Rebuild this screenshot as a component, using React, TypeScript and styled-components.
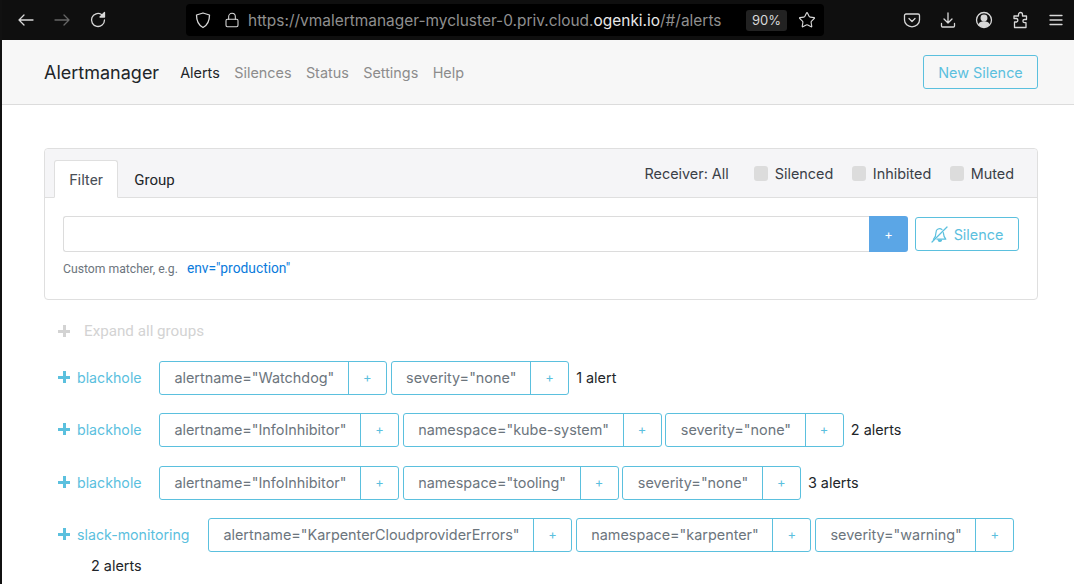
import React from 'react';
import styled, { createGlobalStyle } from 'styled-components';
import { Lock, Star } from 'lucide-react';

const GlobalStyle = createGlobalStyle`
    html, body { margin: 0; padding: 0; background: #fff; }
    body { font-family: Inter, "Liberation Sans", sans-serif; font-size: 14.4px; color: #212529; }
    * { box-sizing: border-box; }
`;

const Shell = styled.div`
    width: 1074px;
    height: 584px;
    overflow: hidden;
    border-left: 2px solid #111;
    display: flex;
    flex-direction: column;
`;

const BrowserBar = styled.div`
    height: 40px;
    margin-left: -2px;
    flex: none;
    background: #0f0f0f;
    display: flex;
    align-items: center;
    color: #d8d8d8;
`;

const NavIcons = styled.div`
    width: 186px;
    padding-left: 17px;
    display: flex;
    gap: 18px;
    flex: none;
`;

const UrlBar = styled.div`
    width: 638px;
    height: 32px;
    background: #000;
    border-radius: 4px;
    display: flex;
    align-items: center;
    padding-left: 8px;
    flex: none;
`;

const LockSlot = styled.span`
    display: flex;
    margin: 0 8px 0 12px;
`;

const UrlText = styled.span`
    width: 498px;
    font-size: 15.45px;
    color: #8f8f8f;
    white-space: nowrap;
    b { font-weight: 400; color: #e8e8e8; }
`;

const Zoom = styled.span`
    width: 41px;
    height: 21px;
    background: #222;
    border-radius: 3px;
    font-size: 13px;
    line-height: 21px;
    text-align: center;
    margin-right: 11px;
`;

const ToolIcons = styled.div`
    margin-left: 79px;
    display: flex;
    gap: 18px;
    align-items: center;
`;

const Navbar = styled.nav`
    height: 65px;
    flex: none;
    background: #f7f7f7;
    border-bottom: 1px solid #dcdcdc;
    display: flex;
    align-items: center;
    padding: 0 36px 0 42px;
`;

const Brand = styled.span`
    font-size: 18px;
    color: #212529;
    margin-right: 21px;
`;

const NavLink = styled.span<{ $active?: boolean }>`
    color: ${p => (p.$active ? '#212529' : '#8c8c8c')};
    margin-right: 14.4px;
`;

const NewSilence = styled.button`
    margin-left: auto;
    width: 115px;
    height: 34px;
    background: transparent;
    border: 1px solid #5bc0de;
    border-radius: 3px;
    color: #5bc0de;
    font: inherit;
`;

const Content = styled.main`
    padding: 43px 36px 0 42px;
`;

const Card = styled.section`
    height: 152px;
    border: 1px solid #dfdfdf;
    border-radius: 4px;
`;

const CardHeader = styled.div`
    height: 49px;
    background: #f5f5f7;
    border-bottom: 1px solid #dfdfdf;
    border-radius: 4px 4px 0 0;
    display: flex;
    align-items: flex-end;
    padding: 0 23px 0 9px;
`;

const Tab = styled.span<{ $active?: boolean }>`
    height: 38px;
    width: ${p => (p.$active ? '64px' : '73px')};
    margin-bottom: -1px;
    padding-top: 1px;
    display: flex;
    align-items: center;
    justify-content: center;
    font-family: Roboto, sans-serif;
    font-size: 15px;
    border-radius: 3px 3px 0 0;
    color: ${p => (p.$active ? '#495057' : '#212529')};
    background: ${p => (p.$active ? '#fff' : 'transparent')};
    border: 1px solid ${p => (p.$active ? '#dfdfdf' : 'transparent')};
    border-bottom: 1px solid ${p => (p.$active ? '#fff' : 'transparent')};
`;

const HeaderRight = styled.div`
    margin-left: auto;
    height: 100%;
    display: flex;
    align-items: center;
    color: #3a4047;
`;

const Receiver = styled.span`
    margin-right: 25px;
`;

const CheckLabel = styled.label`
    display: flex;
    align-items: center;
    gap: 7px;
    margin-left: 18.5px;
    &:first-of-type { margin-left: 0; }
`;

const CheckBox = styled.span`
    width: 14px;
    height: 15px;
    border-radius: 3px;
    background: #dcdcdc;
`;

const CardBody = styled.div`
    padding: 18px 18px 0;
`;

const FilterRow = styled.div`
    display: flex;
    align-items: center;
`;

const FilterInput = styled.div`
    width: 806px;
    height: 36px;
    border: 1px solid #dcdcdc;
    border-right: 0;
    border-radius: 3px 0 0 3px;
`;

const FilterAdd = styled.button`
    width: 39px;
    height: 36px;
    border: 0;
    border-radius: 0 3px 3px 0;
    background: #5ba6e6;
    color: #fff;
    font: inherit;
    font-size: 13px;
`;

const SilenceButton = styled.button`
    margin-left: 7px;
    width: 104px;
    height: 34px;
    border: 1px solid #5bc0de;
    border-radius: 3px;
    background: #fff;
    color: #5bc0de;
    font: inherit;
    display: flex;
    align-items: center;
    justify-content: center;
    gap: 6px;
`;

const Hint = styled.div`
    margin-top: 8px;
    font-family: Roboto, sans-serif;
    font-size: 12.2px;
    color: #6c757d;
    display: flex;
    align-items: baseline;
    gap: 9px;
`;

const HintLink = styled.span`
    font-size: 13.8px;
    color: #0a7bdc;
`;

const ExpandAll = styled.div`
    margin: 21px 0 0 14px;
    height: 20px;
    display: flex;
    align-items: center;
    gap: 14px;
    font-family: Roboto, sans-serif;
    font-size: 15.2px;
    color: #d3d3d3;
`;

const Plus = styled.span<{ $color: string }>`
    position: relative;
    width: 12px;
    height: 12px;
    flex: none;
    &::before, &::after {
        content: '';
        position: absolute;
        background: ${p => p.$color};
    }
    &::before { left: 0; right: 0; top: 4.5px; height: 3px; }
    &::after { top: 0; bottom: 0; left: 4.5px; width: 3px; }
`;

const GroupRow = styled.div<{ $top: number }>`
    margin-top: ${p => p.$top}px;
    display: flex;
    flex-wrap: wrap;
    align-items: center;
    padding-left: 14px;
`;

const GroupName = styled.span<{ $width: number }>`
    width: ${p => p.$width}px;
    padding-bottom: 2px;
    display: flex;
    align-items: center;
    gap: 7px;
    font-size: 14.2px;
    color: #5bc0de;
    flex: none;
`;

const Tag = styled.div`
    display: flex;
    height: 34px;
    margin-right: 3.8px;
    border: 1px solid #5bc0de;
    border-radius: 3px;
`;

const TagLabel = styled.span`
    padding: 0 13.6px 0 14.4px;
    line-height: 32px;
    color: #6c757d;
    white-space: nowrap;
`;

const TagAdd = styled.span`
    width: 38px;
    border-left: 1px solid #5bc0de;
    line-height: 30px;
    text-align: center;
    color: #5bc0de;
    font-size: 13px;
`;

const Count = styled.span<{ $wrapped?: boolean }>`
    margin-left: 3.4px;
    padding-bottom: 1px;
    ${p => p.$wrapped && `
        flex-basis: 100%;
        margin: 5px 0 0;
        padding: 0 0 0 33px;
    `}
`;

const groups = [
    { name: 'blackhole', width: 101, top: 20, tags: ['alertname="Watchdog"', 'severity="none"'], count: '1 alert' },
    { name: 'blackhole', width: 101, top: 18, tags: ['alertname="InfoInhibitor"', 'namespace="kube-system"', 'severity="none"'], count: '2 alerts' },
    { name: 'blackhole', width: 101, top: 19, tags: ['alertname="InfoInhibitor"', 'namespace="tooling"', 'severity="none"'], count: '3 alerts' },
    { name: 'slack-monitoring', width: 150, top: 18, tags: ['alertname="KarpenterCloudproviderErrors"', 'namespace="karpenter"', 'severity="warning"'], count: '2 alerts', wrap: true },
];

const Icon = ({ children, color = 'currentColor' }: { children: React.ReactNode; color?: string }) => (
    <svg width="18" height="18" viewBox="0 0 18 18" fill="none" stroke={color} strokeWidth="1.3" strokeLinecap="round" strokeLinejoin="round">
        {children}
    </svg>
);

const BellSlash = () => (
    <svg width="17" height="17" viewBox="0 0 17 17" fill="none" stroke="currentColor" strokeWidth="1.2" strokeLinecap="round" strokeLinejoin="round">
        <path d="M16 1 1 16" />
        <path d="M11 3.6A3.6 3.6 0 0 0 5 6.4c0 2.6-.9 5.2-2.6 7" />
        <path d="M12.3 6.6c.2 2.4.9 4.7 2.5 6.6 H6" />
        <path d="M7.3 14.2a1.7 1.7 0 0 0 3.2 0z" fill="currentColor" />
    </svg>
);

export default function App() {
    return (
        <Shell>
            <GlobalStyle />
            <BrowserBar>
                <NavIcons>
                    <Icon><path d="M2 9h14M7 4 2 9l5 5" /></Icon>
                    <Icon color="#666"><path d="M2 9h14M11 4l5 5-5 5" /></Icon>
                    <Icon><path d="M15.5 9A6.5 6.5 0 1 1 12.5 3.5" /><path d="M15.5 1.5v4.5H11z" fill="currentColor" /></Icon>
                </NavIcons>
                <UrlBar>
                    <Icon><path d="M9 2 2.5 4c0 5 .8 9.600 6.500 12.500C14.700 13.600 15.500 9 15.500 4z" /></Icon>
                    <LockSlot><Lock size={16} strokeWidth={1.6} /></LockSlot>
                    <UrlText>https://vmalertmanager-mycluster-0.priv.cloud.<b>ogenki.io</b>/#/alerts</UrlText>
                    <Zoom>90%</Zoom>
                    <Star size={18} strokeWidth={1.5} />
                </UrlBar>
                <ToolIcons>
                    <Icon><path d="M3 3h12a1.500 1.500 0 0 1 1.500 1.500V9a7.500 6.800 0 0 1-15 0V4.500A1.500 1.500 0 0 1 3 3z" /><path d="M6 7.500 9 10.500l3-3" /></Icon>
                    <Icon><path d="M9 2v10M5 8l4 4 4-4M2.500 12.500v2.500a1 1 0 0 0 1 1h11a1 1 0 0 0 1-1v-2.500" /></Icon>
                    <Icon><circle cx="9" cy="9" r="7.500" /><circle cx="9" cy="7" r="2.800" fill="currentColor" /><path d="M4 13.500c1-2 3-2.500 5-2.500s4 .5 5 2.500c-1.300 1.400-3 2-5 2s-3.700-.6-5-2z" fill="currentColor" /></Icon>
                    <Icon><path d="M3.500 16.500V11h2a1.800 1.800 0 0 0 0-3.500h-2.500V5H7.500V3.500a2 2 0 0 1 4 0V5h4v3.500H13.500a1.600 1.600 0 0 0 0 3.200H15v4.800z" /></Icon>
                    <Icon><path d="M3 4.500h12M3 9h12M3 13.500h12" /></Icon>
                </ToolIcons>
            </BrowserBar>
            <Navbar>
                <Brand>Alertmanager</Brand>
                <NavLink $active>Alerts</NavLink>
                <NavLink>Silences</NavLink>
                <NavLink>Status</NavLink>
                <NavLink>Settings</NavLink>
                <NavLink>Help</NavLink>
                <NewSilence>New Silence</NewSilence>
            </Navbar>
            <Content>
                <Card>
                    <CardHeader>
                        <Tab $active>Filter</Tab>
                        <Tab>Group</Tab>
                        <HeaderRight>
                            <Receiver>Receiver: All</Receiver>
                            <CheckLabel><CheckBox />Silenced</CheckLabel>
                            <CheckLabel><CheckBox />Inhibited</CheckLabel>
                            <CheckLabel><CheckBox />Muted</CheckLabel>
                        </HeaderRight>
                    </CardHeader>
                    <CardBody>
                        <FilterRow>
                            <FilterInput />
                            <FilterAdd>+</FilterAdd>
                            <SilenceButton><BellSlash />Silence</SilenceButton>
                        </FilterRow>
                        <Hint>Custom matcher, e.g. <HintLink>env="production"</HintLink></Hint>
                    </CardBody>
                </Card>
                <ExpandAll><Plus $color="#d3d3d3" />Expand all groups</ExpandAll>
                {groups.map((group, i) => (
                    <GroupRow key={i} $top={group.top}>
                        <GroupName $width={group.width}><Plus $color="#5bc0de" />{group.name}</GroupName>
                        {group.tags.map(tag => (
                            <Tag key={tag}>
                                <TagLabel>{tag}</TagLabel>
                                <TagAdd>+</TagAdd>
                            </Tag>
                        ))}
                        <Count $wrapped={group.wrap}>{group.count}</Count>
                    </GroupRow>
                ))}
            </Content>
        </Shell>
    );
}
